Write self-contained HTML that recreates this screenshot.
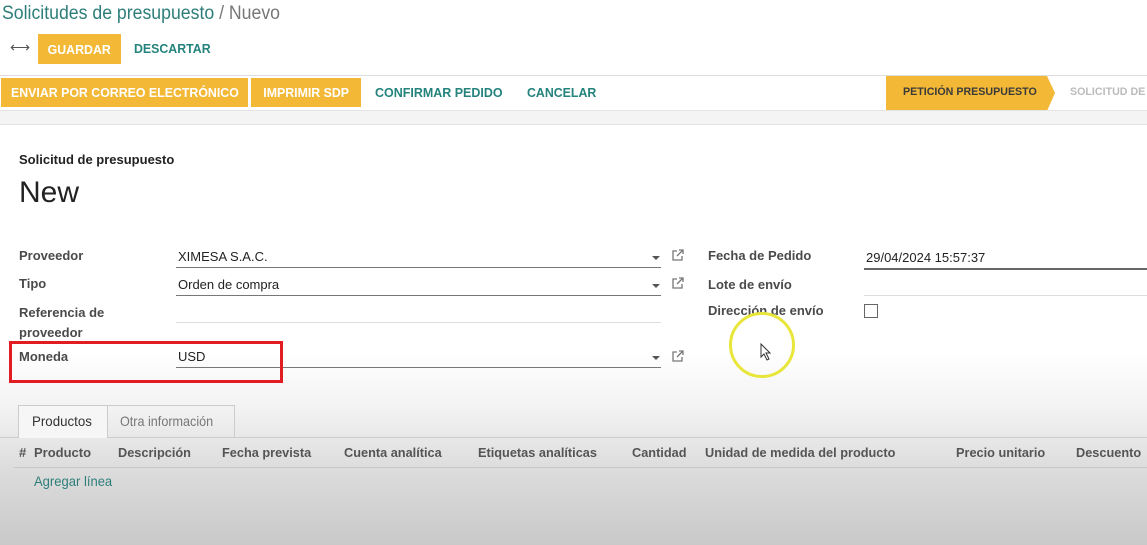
<!DOCTYPE html>
<html><head><meta charset="utf-8"><style>
*{margin:0;padding:0;box-sizing:border-box}
body{width:1147px;height:545px;overflow:hidden;position:relative;font-family:"Liberation Sans",sans-serif;background:#fff}
.bg{position:absolute;left:0;top:0;width:1147px;height:545px;background:linear-gradient(to bottom,#fff 0,#fff 350px,#f2f2f2 410px,#dcdcdc 470px,#c9c9c9 545px)}
.a{position:absolute;white-space:nowrap}
.n{display:inline-block;transform-origin:0 50%}
.btn{position:absolute;background:#f3b836;color:#fff;font-weight:bold;font-size:13px;display:flex;align-items:center;justify-content:center}
.teal{color:#24837c;font-weight:bold;font-size:13px}
.lbl{font-weight:bold;color:#4a4a4a;font-size:13px}
.ul{position:absolute;height:1px;background:#777}
.caret{position:absolute;width:0;height:0;border-left:4px solid transparent;border-right:4px solid transparent;border-top:4px solid #555}
.ext{position:absolute;width:14px;height:14px}
.th{font-weight:bold;color:#555;font-size:13px}
</style></head><body>
<div class="bg"></div>
<div class="a" style="left:2px;top:3px;font-size:19px;color:#2d7e7a"><span class="n" style="transform:scaleX(.93)">Solicitudes de presupuesto <span style="color:#777">/ Nuevo</span></span></div>
<div class="a" style="left:10px;top:39px;font-size:14px;color:#555">⟷</div>
<div class="btn" style="left:38px;top:34px;width:83px;height:30px"><span class="n" style="transform:scaleX(.95);transform-origin:50% 50%">GUARDAR</span></div>
<div class="a teal" style="left:134px;top:41px"><span class="n" style="transform:scaleX(.95)">DESCARTAR</span></div>
<div class="a" style="left:0;top:75px;width:1147px;height:1px;background:#ddd"></div>
<div class="btn" style="left:1px;top:78px;width:247px;height:29px"><span class="n" style="transform:scaleX(.95);transform-origin:50% 50%">ENVIAR POR CORREO ELECTRÓNICO</span></div>
<div class="btn" style="left:251px;top:78px;width:110px;height:29px"><span class="n" style="transform:scaleX(.95);transform-origin:50% 50%">IMPRIMIR SDP</span></div>
<div class="a teal" style="left:375px;top:85px"><span class="n" style="transform:scaleX(.96)">CONFIRMAR PEDIDO</span></div>
<div class="a teal" style="left:527px;top:85px"><span class="n" style="transform:scaleX(.95)">CANCELAR</span></div>
<svg class="a" style="left:886px;top:76px" width="170" height="35"><polygon points="0,0 161,0 169,17 161,35 0,35" fill="#f3b836"/></svg>
<div class="a" style="left:903px;top:86px;font-size:11px;font-weight:bold;color:#3a3a3a"><span class="n" style="transform:scaleX(.97)">PETICIÓN PRESUPUESTO</span></div>
<div class="a" style="left:1070px;top:86px;font-size:11px;font-weight:bold;color:#bbb"><span class="n" style="transform:scaleX(.97)">SOLICITUD DE</span></div>
<div class="a" style="left:0;top:110px;width:1147px;height:15px;background:#f4f4f4;border-top:1px solid #e4e4e4;border-bottom:1px solid #e2e2e2"></div>
<div class="a lbl" style="left:19px;top:152px;color:#222">Solicitud de presupuesto</div>
<div class="a" style="left:19px;top:176px;font-size:30px;color:#222">New</div>

<div class="a lbl" style="left:19px;top:248px">Proveedor</div>
<div class="a lbl" style="left:19px;top:276px">Tipo</div>
<div class="a lbl" style="left:19px;top:303px;line-height:20px">Referencia de<br>proveedor</div>
<div class="a lbl" style="left:19px;top:349px">Moneda</div>

<div class="a" style="left:178px;top:249px;font-size:13px;color:#222">XIMESA S.A.C.</div>
<div class="ul" style="left:176px;top:267px;width:485px"></div>
<div class="a" style="left:178px;top:277px;font-size:13px;color:#222">Orden de compra</div>
<div class="ul" style="left:176px;top:295px;width:485px"></div>
<div class="ul" style="left:176px;top:322px;width:485px;background:#ddd"></div>
<div class="a" style="left:178px;top:349px;font-size:13px;color:#222">USD</div>
<div class="ul" style="left:176px;top:367px;width:485px"></div>
<div class="caret" style="left:652px;top:256px"></div>
<div class="caret" style="left:652px;top:284px"></div>
<div class="caret" style="left:652px;top:356px"></div>
<svg class="ext" style="left:671px;top:248px" viewBox="0 0 14 14"><path d="M6 3H2v9h9V8M8 2h4v4M12 2L6 8" fill="none" stroke="#777" stroke-width="1.3"/></svg>
<svg class="ext" style="left:671px;top:276px" viewBox="0 0 14 14"><path d="M6 3H2v9h9V8M8 2h4v4M12 2L6 8" fill="none" stroke="#777" stroke-width="1.3"/></svg>
<svg class="ext" style="left:671px;top:349px" viewBox="0 0 14 14"><path d="M6 3H2v9h9V8M8 2h4v4M12 2L6 8" fill="none" stroke="#777" stroke-width="1.3"/></svg>
<div class="a" style="left:9px;top:341px;width:274px;height:42px;border:3px solid #e31b23"></div>

<div class="a lbl" style="left:708px;top:248px">Fecha de Pedido</div>
<div class="a lbl" style="left:708px;top:277px">Lote de envío</div>
<div class="a lbl" style="left:708px;top:303px">Dirección de envío</div>
<div class="a" style="left:866px;top:250px;font-size:13px;color:#222">29/04/2024 15:57:37</div>
<div class="ul" style="left:864px;top:268px;width:283px;background:#666;height:2px"></div>
<div class="ul" style="left:864px;top:295px;width:283px;background:#ddd"></div>
<div class="a" style="left:864px;top:304px;width:14px;height:14px;border:1px solid #666;background:#fff"></div>
<div class="a" style="left:729px;top:312px;width:66px;height:66px;border:3px solid #e8e63a;border-radius:50%"></div>
<svg class="a" style="left:760px;top:343px" width="14" height="18" viewBox="0 0 14 18"><path d="M1 1v13l3-3 3 6 2-1-3-6h4z" fill="#fff" stroke="#333" stroke-width="1"/></svg>

<div class="a" style="left:0;top:437px;width:1147px;height:1px;background:#ccc"></div>
<div class="a" style="left:18px;top:405px;width:90px;height:33px;background:#f6f6f6;border:1px solid #ccc;border-bottom:none"></div>
<div class="a" style="left:107px;top:405px;width:128px;height:32px;border:1px solid #ccc;border-left:none;border-bottom:none"></div>
<div class="a" style="left:32px;top:413px;font-size:14px;color:#333"><span class="n" style="transform:scaleX(.95)">Productos</span></div>
<div class="a" style="left:120px;top:413px;font-size:14px;color:#777"><span class="n" style="transform:scaleX(.9)">Otra información</span></div>

<div class="a th" style="left:19px;top:445px">#</div>
<div class="a th" style="left:34px;top:445px">Producto</div>
<div class="a th" style="left:118px;top:445px"><span class="n" style="transform:scaleX(.98)">Descripción</span></div>
<div class="a th" style="left:222px;top:445px"><span class="n" style="transform:scaleX(.98)">Fecha prevista</span></div>
<div class="a th" style="left:344px;top:445px"><span class="n" style="transform:scaleX(.98)">Cuenta analítica</span></div>
<div class="a th" style="left:478px;top:445px"><span class="n" style="transform:scaleX(.98)">Etiquetas analíticas</span></div>
<div class="a th" style="left:632px;top:445px"><span class="n" style="transform:scaleX(.98)">Cantidad</span></div>
<div class="a th" style="left:705px;top:445px"><span class="n" style="transform:scaleX(.98)">Unidad de medida del producto</span></div>
<div class="a th" style="left:956px;top:445px"><span class="n" style="transform:scaleX(.98)">Precio unitario</span></div>
<div class="a th" style="left:1076px;top:445px"><span class="n" style="transform:scaleX(.98)">Descuento</span></div>
<div class="a" style="left:14px;top:467px;width:1133px;height:1px;background:#c8c8c8"></div>
<div class="a" style="left:34px;top:473px;font-size:14px;color:#2d7e7a"><span class="n" style="transform:scaleX(.93)">Agregar línea</span></div>
</body></html>
